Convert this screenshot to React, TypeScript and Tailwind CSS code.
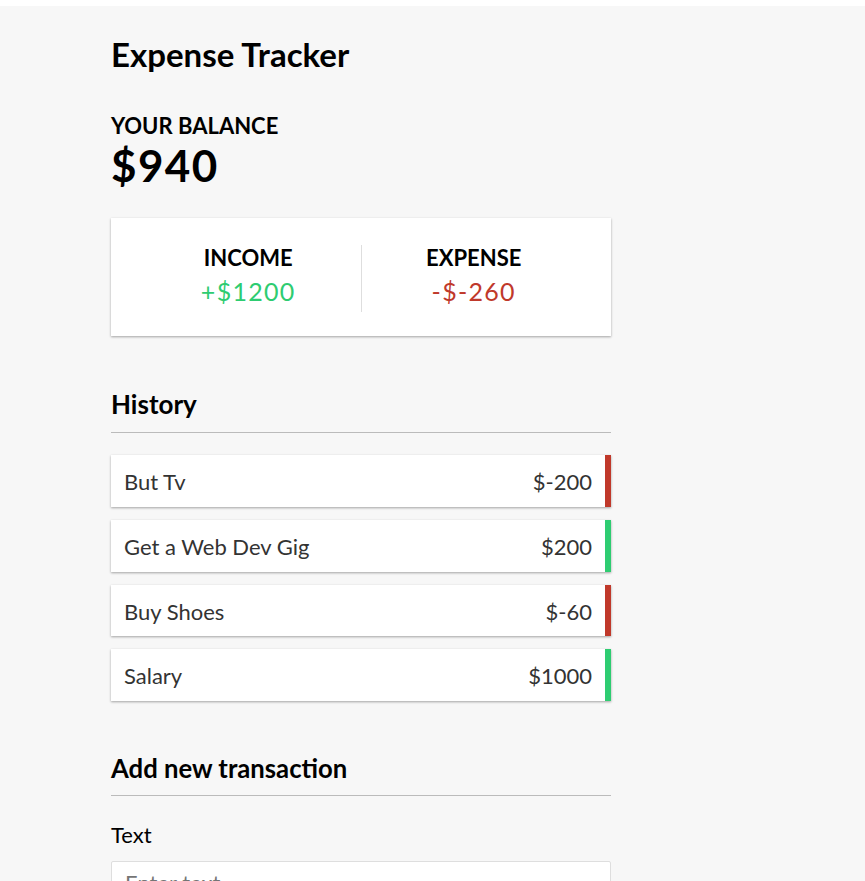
import React from "react";

type Tx = { id: number; text: string; amount: number };

const transactions: Tx[] = [
  { id: 1, text: "But Tv", amount: -200 },
  { id: 2, text: "Get a Web Dev Gig", amount: 200 },
  { id: 3, text: "Buy Shoes", amount: -60 },
  { id: 4, text: "Salary", amount: 1000 },
];

const shadow = "shadow-[0_1px_3px_rgba(0,0,0,0.12),0_1px_2px_rgba(0,0,0,0.24)]";

export default function App() {
  return (
    <div className="min-h-screen bg-[#f7f7f7] font-['Lato',sans-serif] leading-[1.2] text-black">
      <div className="h-[6px] bg-white" />
      <div className="ml-[111px] w-[500px] pt-[28.5px] pb-10">
        <h2 className="text-[33px] font-bold">Expense Tracker</h2>

        <h4 className="mt-[39px] text-[22px] font-bold uppercase">Your Balance</h4>
        <h1 className="text-[44px] font-bold tracking-[1.4px]">$940</h1>

        <div className={"mt-[25.5px] flex bg-white px-[25px] pt-[27px] pb-[24px] " + shadow}>
          <div className="flex-1 border-r border-[#dedede] text-center">
            <h4 className="text-[22px] font-bold uppercase">Income</h4>
            <p className="mt-[4.6px] mb-[6.5px] text-[25px] tracking-[1.3px] text-[#2ecc71]">+$1200</p>
          </div>
          <div className="flex-1 text-center">
            <h4 className="text-[22px] font-bold uppercase">Expense</h4>
            <p className="mt-[4.6px] mb-[6.5px] text-[25px] tracking-[1.3px] text-[#c0392b]">-$-260</p>
          </div>
        </div>

        <h3 className="mt-[52.5px] border-b border-[#bbb] pb-[12.5px] text-[26px] font-bold">
          History
        </h3>
        <ul className="mt-[21.7px] flex list-none flex-col gap-[13px] p-0">
          {transactions.map((t) => (
            <li
              key={t.id}
              className={
                "flex justify-between bg-white px-[13px] pt-[14px] pb-[12px] text-[22px] leading-[25.7px] text-[#333] " +
                shadow +
                " " +
                (t.amount < 0
                  ? "border-r-[6.5px] border-[#c0392b]"
                  : "border-r-[6.5px] border-[#2ecc71]")
              }
            >
              {t.text} <span>${t.amount}</span>
            </li>
          ))}
        </ul>

        <h3 className="mt-[52px] border-b border-[#bbb] pb-[10.8px] text-[25.7px] font-bold">
          Add new transaction
        </h3>
        <form className="pt-[26px]">
          <div>
            <label className="mb-[12.8px] block text-[22px]">Text</label>
            <input
              type="text"
              placeholder="Enter text..."
              className="block w-full rounded-[2px] border border-[#dedede] bg-white px-[13px] py-[8px] text-[22px] leading-[1.2] placeholder:text-[#757575]"
            />
          </div>
          <div className="pt-[24px]">
            <label className="mb-[14.8px] block text-[22px]">
              Amount <br />
              (negative - expense, positive - income)
            </label>
            <input
              type="number"
              placeholder="Enter amount..."
              className="block w-full rounded-[2px] border border-[#dedede] bg-white px-[13px] py-[8px] text-[22px] leading-[1.2] placeholder:text-[#757575]"
            />
          </div>
          <button
            type="button"
            className={"mt-[13px] mb-[39px] block w-full bg-[#9c88ff] p-[13px] text-[22px] text-white " + shadow}
          >
            Add transaction
          </button>
        </form>
      </div>
    </div>
  );
}
